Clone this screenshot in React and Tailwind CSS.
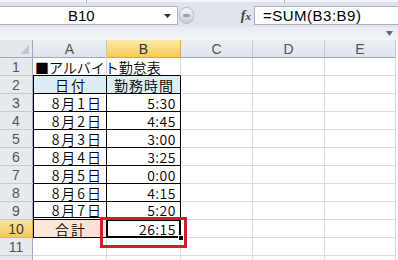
import React from "react";

const COLS = [
  { key: "A", w: 74 },
  { key: "B", w: 74 },
  { key: "C", w: 72 },
  { key: "D", w: 72 },
  { key: "E", w: 71 },
];

const dates = ["8月1日", "8月2日", "8月3日", "8月4日", "8月5日", "8月6日", "8月7日"];
const times = ["5:30", "4:45", "3:00", "3:25", "0:00", "4:15", "5:20"];

const font = { fontFamily: '"Noto Sans CJK JP", "Liberation Sans", sans-serif' };

function RowHeader({ n, selected }) {
  return (
    <div
      style={{ fontFamily: '"Liberation Sans", sans-serif' }}
      className={
        "w-[33px] h-[18px] shrink-0 flex items-center justify-center text-[14px] leading-none border-r border-b " +
        (selected
          ? "bg-gradient-to-b from-[#fbe3a0] to-[#f5c85a] border-r-[#e3a53c] border-b-[#d9b97a] text-[#3b3b3b]"
          : "bg-[#e6e9ee] border-r-[#9eaabb] border-b-[#c5cad3] text-[#555]")
      }
    >
      {n}
    </div>
  );
}

function Cell({ w, className = "", children }) {
  return (
    <div
      style={{ width: w }}
      className={"h-[18px] shrink-0 flex items-center text-[14px] leading-none font-[350] text-black border-r border-b border-[#d8dadf] " + className}
    >
      {children}
    </div>
  );
}

export default function App() {
  const rows = [];
  for (let r = 1; r <= 12; r++) {
    const cells = COLS.map((c, i) => {
      let cls = "";
      let content = null;
      if (r === 1 && i === 0) {
        cls = "border-b-black overflow-visible whitespace-nowrap pl-[2px]";
        content = <span className="text-[14px] relative z-10">■アルバイト勤怠表</span>;
      }
      if (r === 1 && i === 1) cls = "border-b-black";
      if (r === 2 && i <= 1) {
        cls = "bg-[#daeef3] border-r-black border-b-black justify-center " + (i === 0 ? "border-l border-l-black" : "");
        content = i === 0 ? <span className="tracking-[2px] pl-[2px]">日付</span> : <span className="tracking-[1px] pl-[1px]">勤務時間</span>;
      }
      if (r >= 3 && r <= 9 && i <= 1) {
        cls =
          "border-r-black justify-end " +
          (i === 0 ? "border-l border-l-black tracking-[2px] pr-[3px] " : "pr-[4px] tracking-[0.5px] ") +
          (r === 9 ? "border-b-[3px] border-b-black border-double" : "border-b-black");
        content = i === 0 ? dates[r - 3] : times[r - 3];
      }
      if (r === 10 && i === 0) {
        cls = "bg-gradient-to-r from-[#fde9dc] to-[#fbe0cf] border-l border-l-black border-r-black border-b-black justify-center";
        content = <span className="tracking-[2px] pl-[2px]">合計</span>;
      }
      if (r === 10 && i === 1) {
        cls = "border-r-black border-b-black justify-end pr-[4px] tracking-[0.5px] relative";
        content = (
          <>
            <span className="relative z-10">26:15</span>
            <div className="absolute left-[-1px] top-[-1px] w-[75px] h-[19px] border-2 border-black pointer-events-none">
              <div className="absolute inset-0 border border-white" />
            </div>
            <div className="absolute right-[-4px] bottom-[-4px] w-[6px] h-[6px] bg-black border border-white z-20" />
          </>
        );
      }
      return (
        <Cell key={c.key} w={c.w} className={cls}>
          {content}
        </Cell>
      );
    });
    rows.push(
      <div key={r} className="flex">
        <RowHeader n={r <= 11 ? r : ""} selected={r === 10} />
        {cells}
      </div>
    );
  }

  return (
    <div style={font} className="w-[398px] h-[260px] overflow-hidden bg-white relative">
      {/* formula bar */}
      <div className="h-[27px] bg-[#dfe4eb] border-t-[2px] border-t-[#f3f5f8] flex items-start pt-[4px] relative">
        <div className="absolute left-[86px] top-[-2px] w-px h-[3px] bg-[#aab3bf]" />
        <div className="absolute left-[284px] top-[-2px] w-px h-[3px] bg-[#aab3bf]" />
        <div className="w-[178px] h-[19px] bg-white border border-[#a9b3c0] border-l-0 flex items-center relative">
          <span className="absolute left-[68px] text-[15px] leading-none text-black" style={{ fontFamily: '"Liberation Sans", sans-serif' }}>B10</span>
          <svg className="absolute left-[164px] top-[7px]" width="7" height="4" viewBox="0 0 7 4">
            <path d="M0 0H7L3.5 4Z" fill="#333" />
          </svg>
        </div>
        <div className="ml-[1px] w-[15px] h-[17px] mt-[1px] rounded-full bg-gradient-to-b from-[#f4f5f7] to-[#c9ced6] border border-[#b4bbc6] flex items-center justify-center">
          <div className="w-[7px] h-[3px] rounded-full bg-[#9aa2ad]" />
        </div>
        <div className="w-[60px] h-[19px] flex items-center justify-end pr-[3px]">
          <span className="italic font-bold text-[14px] text-[#444]" style={{ fontFamily: '"Liberation Serif", serif' }}>
            f<span className="text-[11px]">x</span>
          </span>
        </div>
        <div className="flex-1 h-[19px] bg-white border border-[#a9b3c0] border-r-0 flex items-center pl-[8px]">
          <span className="text-[15px] leading-none text-black tracking-[0.5px]" style={{ fontFamily: '"Liberation Sans", sans-serif' }}>=SUM(B3:B9)</span>
        </div>
      </div>
      <div className="h-[13px] bg-gradient-to-b from-[#e8ebf0] to-[#f3f5f8] relative">
        <svg className="absolute left-[386px] top-[4px]" width="7" height="5" viewBox="0 0 7 5">
          <path d="M0 0H7L3.5 5Z" fill="#5e6b7d" />
        </svg>
      </div>
      {/* column headers */}
      <div className="flex">
        <div className="w-[33px] h-[18px] shrink-0 bg-[#e4e7ec] border-r border-b border-[#9eaabb] relative">
          <svg className="absolute right-[3px] bottom-[3px]" width="9" height="9" viewBox="0 0 9 9">
            <path d="M9 0V9H0Z" fill="#c3c8d0" />
          </svg>
        </div>
        {COLS.map((c) => (
          <div
            key={c.key}
            style={{ width: c.w, fontFamily: '"Liberation Sans", sans-serif' }}
            className={
              "h-[18px] shrink-0 flex items-center justify-center text-[14px] leading-none border-r border-b " +
              (c.key === "B"
                ? "bg-gradient-to-b from-[#fde9a8] to-[#f6cb54] border-r-[#e2a946] border-b-[#e3a53c] text-[#333]"
                : "bg-gradient-to-b from-[#eceef2] to-[#e0e4ea] border-r-[#c2c8d1] border-b-[#9eaabb] text-[#555]")
            }
          >
            {c.key}
          </div>
        ))}
      </div>
      {rows}
      {/* red annotation */}
      <div className="absolute left-[100px] top-[217px] w-[87px] h-[31px] border-[3px] border-[#cc1f2b] pointer-events-none" />
    </div>
  );
}
